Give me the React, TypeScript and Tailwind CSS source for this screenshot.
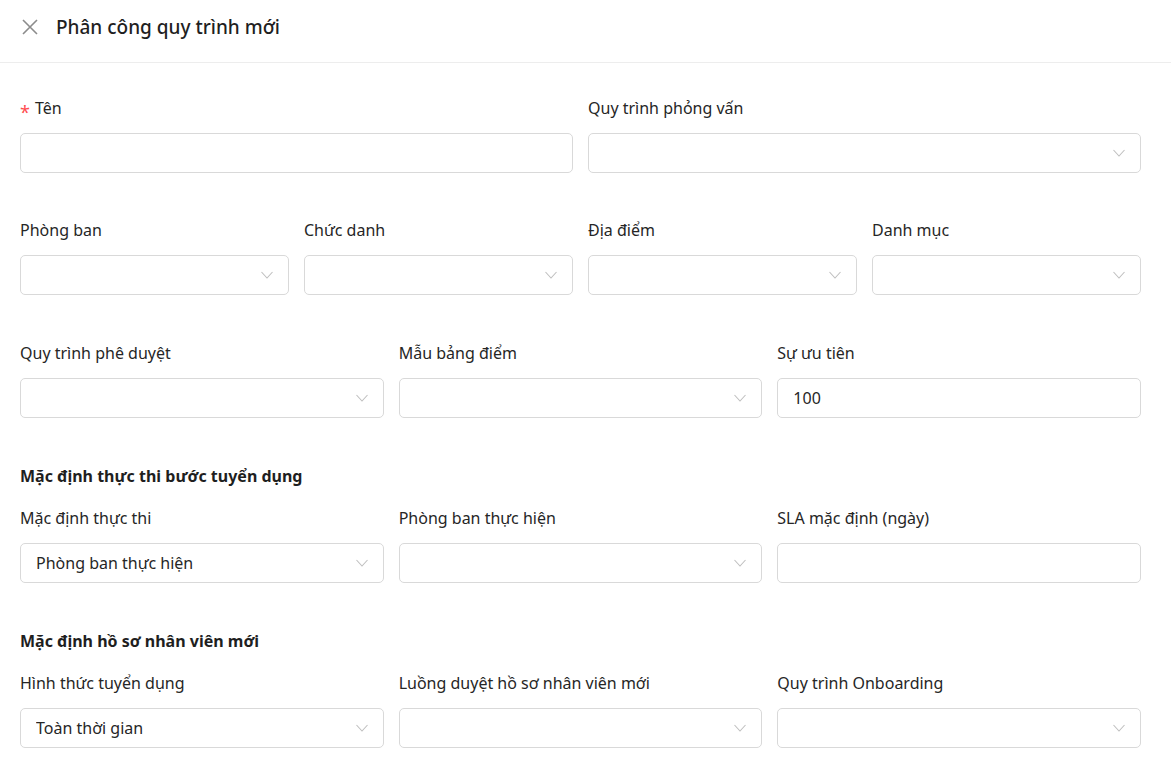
import type { ReactNode } from "react";

const font = { fontFamily: "'Noto Sans', Lato, sans-serif" };

function Chevron() {
    return (
        <svg width="12" height="8" viewBox="0 0 12 8" fill="none" className="shrink-0">
            <polyline points="0.5,1 6,7 11.5,1" stroke="#bfbfbf" strokeWidth="1.1" />
        </svg>
    );
}

function Label({ children, required }: { children: ReactNode; required?: boolean }) {
    return (
        <div className="h-6 leading-6 text-[16px] text-[#262626] mb-[13px] flex items-center">
            {required && <span className="text-[#ff4d4f] mr-[5px] text-[18px] leading-none translate-y-[4px]">*</span>}
            {children}
        </div>
    );
}

function Field({
    label,
    value,
    select,
    required,
}: {
    label: string;
    value?: string;
    select?: boolean;
    required?: boolean;
}) {
    return (
        <div className="min-w-0">
            <Label required={required}>{label}</Label>
            <div className="h-10 border border-[#d9d9d9] rounded-[5px] bg-white pl-[15px] pr-[15px] flex items-center justify-between">
                <span className="text-[16px] text-[#262626] truncate">{value ?? ""}</span>
                {select && <Chevron />}
            </div>
        </div>
    );
}

function Section({ children }: { children: ReactNode }) {
    return <div className="h-6 leading-6 text-[16px] font-bold text-[#1f1f1f] mb-[18px]">{children}</div>;
}

export default function App() {
    return (
        <div className="min-h-screen bg-white" style={font}>
            <div className="h-[63px] border-b border-[#ededed] flex items-center pl-[22px] gap-[18px]">
                <svg width="16" height="16" viewBox="0 0 16 16" fill="none" className="-mt-2">
                    <path d="M1 1 L15 15 M15 1 L1 15" stroke="#8c8c8c" strokeWidth="1.6" />
                </svg>
                <h1 className="text-[19px] font-medium text-[#1f1f1f] -mt-2">Phân công quy trình mới</h1>
            </div>

            <div className="pl-5 pr-[30px] pt-[33px] flex flex-col gap-[46px]">
                <div className="grid grid-cols-2 gap-[15px] -mb-px">
                    <Field label="Tên" required />
                    <Field label="Quy trình phỏng vấn" select />
                </div>

                <div className="grid grid-cols-4 gap-[15px]">
                    <Field label="Phòng ban" select />
                    <Field label="Chức danh" select />
                    <Field label="Địa điểm" select />
                    <Field label="Danh mục" select />
                </div>

                <div className="grid grid-cols-3 gap-[15px]">
                    <Field label="Quy trình phê duyệt" select />
                    <Field label="Mẫu bảng điểm" select />
                    <Field label="Sự ưu tiên" value="100" />
                </div>

                <div>
                    <Section>Mặc định thực thi bước tuyển dụng</Section>
                    <div className="grid grid-cols-3 gap-[15px]">
                        <Field label="Mặc định thực thi" value="Phòng ban thực hiện" select />
                        <Field label="Phòng ban thực hiện" select />
                        <Field label="SLA mặc định (ngày)" />
                    </div>
                </div>

                <div>
                    <Section>Mặc định hồ sơ nhân viên mới</Section>
                    <div className="grid grid-cols-3 gap-[15px]">
                        <Field label="Hình thức tuyển dụng" value="Toàn thời gian" select />
                        <Field label="Luồng duyệt hồ sơ nhân viên mới" select />
                        <Field label="Quy trình Onboarding" select />
                    </div>
                </div>
            </div>
        </div>
    );
}
